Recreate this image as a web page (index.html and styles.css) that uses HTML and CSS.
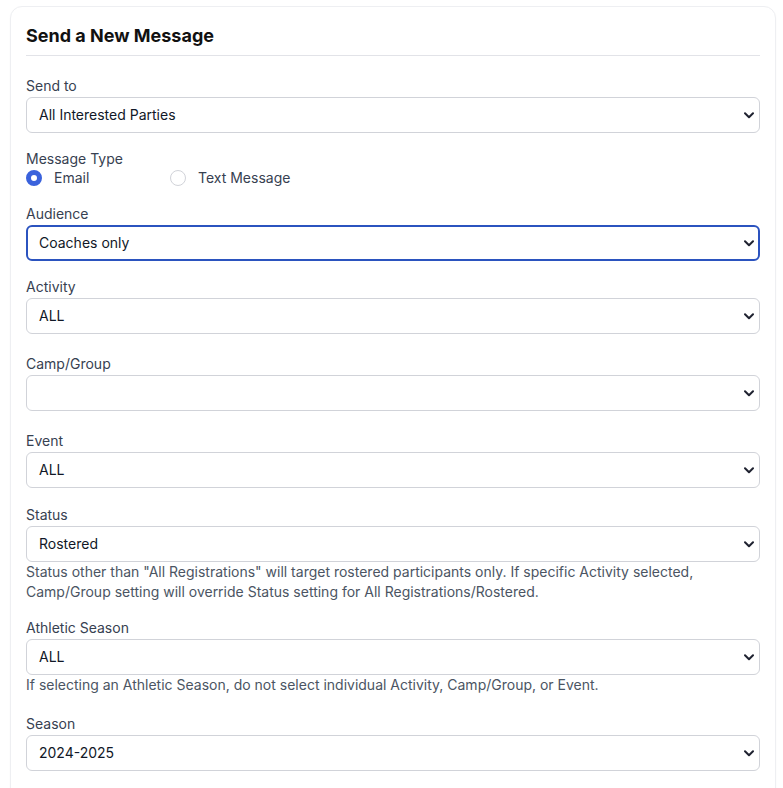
FILE: index.html
```html
<!DOCTYPE html>
<html>
<head>
<meta charset="utf-8">
<link rel="stylesheet" href="styles.css">
</head>
<body>
<div class="card">
  <h2 class="title">Send a New Message</h2>

  <div class="field">
    <label class="label">Send to</label>
    <div class="select-wrap">
      <div class="select">All Interested Parties</div>
      <svg class="chev" width="10" height="7" viewBox="0 0 10 7"><path d="M1 1.2 L5 5.2 L9 1.2" fill="none" stroke="#1f2230" stroke-width="2" stroke-linecap="round" stroke-linejoin="round"/></svg>
    </div>
  </div>

  <div class="field field-radio">
    <label class="label">Message Type</label>
    <div class="radios">
      <div class="radio-opt"><span class="radio checked"></span><span>Email</span></div>
      <div class="radio-opt"><span class="radio"></span><span>Text Message</span></div>
    </div>
  </div>

  <div class="field">
    <label class="label">Audience</label>
    <div class="select-wrap">
      <div class="select focused">Coaches only</div>
      <svg class="chev" width="10" height="7" viewBox="0 0 10 7"><path d="M1 1.2 L5 5.2 L9 1.2" fill="none" stroke="#1f2230" stroke-width="2" stroke-linecap="round" stroke-linejoin="round"/></svg>
    </div>
  </div>

  <div class="field field-wide">
    <label class="label">Activity</label>
    <div class="select-wrap">
      <div class="select">ALL</div>
      <svg class="chev" width="10" height="7" viewBox="0 0 10 7"><path d="M1 1.2 L5 5.2 L9 1.2" fill="none" stroke="#1f2230" stroke-width="2" stroke-linecap="round" stroke-linejoin="round"/></svg>
    </div>
  </div>

  <div class="field field-wide">
    <label class="label">Camp/Group</label>
    <div class="select-wrap">
      <div class="select"></div>
      <svg class="chev" width="10" height="7" viewBox="0 0 10 7"><path d="M1 1.2 L5 5.2 L9 1.2" fill="none" stroke="#1f2230" stroke-width="2" stroke-linecap="round" stroke-linejoin="round"/></svg>
    </div>
  </div>

  <div class="field field-event">
    <label class="label">Event</label>
    <div class="select-wrap">
      <div class="select">ALL</div>
      <svg class="chev" width="10" height="7" viewBox="0 0 10 7"><path d="M1 1.2 L5 5.2 L9 1.2" fill="none" stroke="#1f2230" stroke-width="2" stroke-linecap="round" stroke-linejoin="round"/></svg>
    </div>
  </div>

  <div class="field">
    <label class="label">Status</label>
    <div class="select-wrap">
      <div class="select">Rostered</div>
      <svg class="chev" width="10" height="7" viewBox="0 0 10 7"><path d="M1 1.2 L5 5.2 L9 1.2" fill="none" stroke="#1f2230" stroke-width="2" stroke-linecap="round" stroke-linejoin="round"/></svg>
    </div>
    <p class="help">Status other than "All Registrations" will target rostered participants only. If specific Activity selected, Camp/Group setting will override Status setting for All Registrations/Rostered.</p>
  </div>

  <div class="field field-mid">
    <label class="label">Athletic Season</label>
    <div class="select-wrap">
      <div class="select">ALL</div>
      <svg class="chev" width="10" height="7" viewBox="0 0 10 7"><path d="M1 1.2 L5 5.2 L9 1.2" fill="none" stroke="#1f2230" stroke-width="2" stroke-linecap="round" stroke-linejoin="round"/></svg>
    </div>
    <p class="help">If selecting an Athletic Season, do not select individual Activity, Camp/Group, or Event.</p>
  </div>

  <div class="field field-last">
    <label class="label">Season</label>
    <div class="select-wrap">
      <div class="select">2024-2025</div>
      <svg class="chev" width="10" height="7" viewBox="0 0 10 7"><path d="M1 1.2 L5 5.2 L9 1.2" fill="none" stroke="#1f2230" stroke-width="2" stroke-linecap="round" stroke-linejoin="round"/></svg>
    </div>
  </div>

  <div class="next-box"></div>
</div>
</body>
</html>
```

FILE: styles.css
```css
* { box-sizing: border-box; }
html, body { margin: 0; padding: 0; background: #ffffff; }
body {
  padding: 6px 7px 0 10px;
  font-family: Inter, "Noto Sans", "Liberation Sans", sans-serif;
  font-size: 14px;
  line-height: 20px;
  color: #111827;
}
.card {
  border: 1px solid #eeeff2;
  border-radius: 12px;
  padding: 15px 15px 40px 15px;
  box-shadow: 0 1px 2px rgba(0,0,0,0.03);
  background: #fff;
}
.title {
  margin: 0 0 20px 0;
  font-size: 18px;
  line-height: 28px;
  font-weight: 700;
  color: #111111;
  padding-bottom: 5px;
  border-bottom: 1px solid #e2e3e8;
}
.field { margin-bottom: 16px; }
.field-radio { margin-bottom: 16px; }
.field-wide { margin-bottom: 20px; }
.field-event { margin-bottom: 17px; }
.field-mid { margin-bottom: 19px; }
.field-last { margin-bottom: 17px; }
.label {
  display: block;
  color: #374151;
  margin-bottom: 1px;
}
.field-radio .label { margin-bottom: 0; }
.select-wrap { position: relative; }
.select {
  height: 36px;
  border: 1px solid #d1d3d9;
  border-radius: 6px;
  padding: 0 12px;
  display: flex;
  align-items: center;
  color: #111827;
  background: #fff;
}
.select.focused {
  border: 2px solid #2b53bf;
  padding: 0 11px;
}
.chev {
  position: absolute;
  right: 6px;
  top: 15px;
}
.radios { display: flex; height: 20px; margin-top: -1px; }
.radio-opt {
  width: 144px;
  display: flex;
  align-items: center;
  gap: 12px;
  color: #374151;
}
.radio {
  width: 16px;
  height: 16px;
  border-radius: 50%;
  border: 1px solid #d1d3d9;
  background: #fff;
  flex: none;
}
.radio.checked {
  border: 5px solid #3a62dc;
  background: #fff;
}
.help {
  margin: 0;
  color: #4b5563;
}
.next-box {
  height: 30px;
  border: 1px solid #d1d3d9;
  border-radius: 6px;
}
```
